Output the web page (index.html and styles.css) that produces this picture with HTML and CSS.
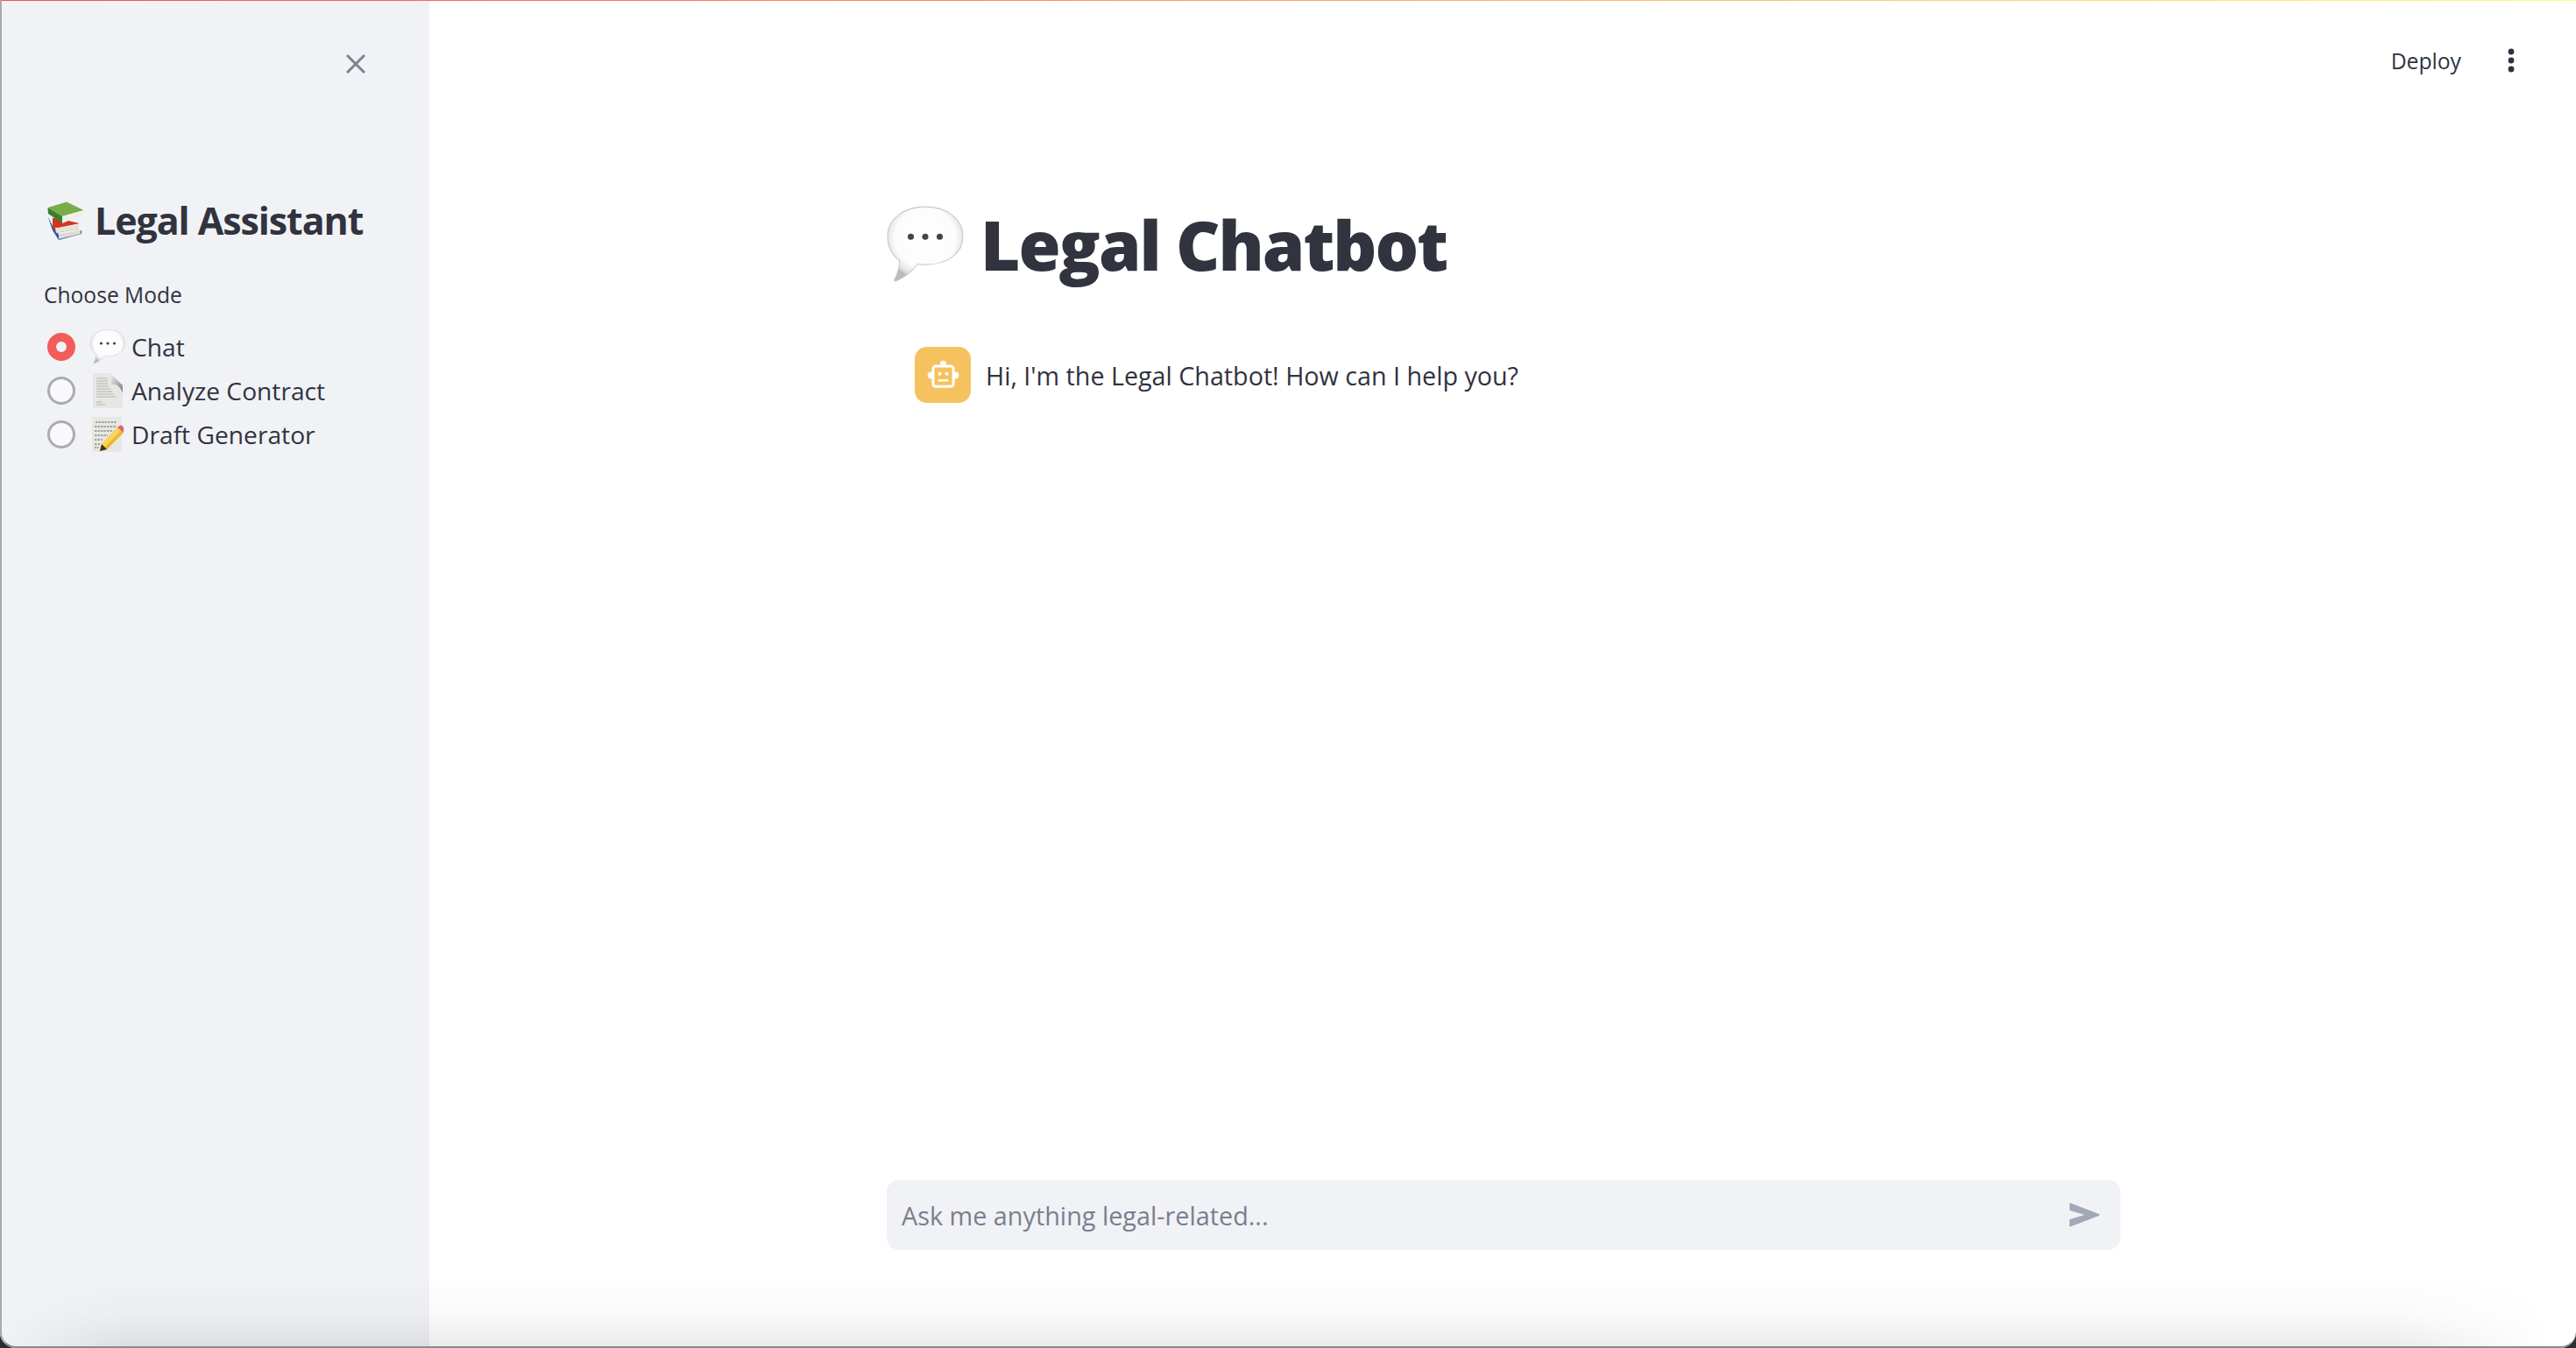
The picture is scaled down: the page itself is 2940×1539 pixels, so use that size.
FILE: index.html
```html
<!DOCTYPE html>
<html>
<head>
    <title>Legal Assistant</title>
    <link rel="stylesheet" href="styles.css">
</head>
<body>
    <svg class="defs" width="0" height="0">
        <defs>
            <radialGradient id="bubble-fill" cx="50%" cy="42%" r="56%">
                <stop offset="0" stop-color="#ffffff"/>
                <stop offset="0.72" stop-color="#fcfcfc"/>
                <stop offset="0.92" stop-color="#e2e2e2"/>
                <stop offset="1" stop-color="#bababa"/>
            </radialGradient>
            <linearGradient id="curl-fill" x1="0" y1="0" x2="1" y2="1">
                <stop offset="0" stop-color="#f2f2f2"/>
                <stop offset="1" stop-color="#7d7d7d"/>
            </linearGradient>
            <symbol id="bubble" viewBox="0 0 40 40">
                <path d="M20 0.5C31 0.5 39.5 6.5 39.5 16C39.5 25 31 30.5 20 30.5C18.6 30.5 17.2 30.4 15.9 30.2C13.6 33.6 9.6 36.8 5 39C4.2 39.3 3.7 38.8 4.1 38.1C5.6 35.4 6.6 32 6.6 28.4C2.9 25.6 0.5 21.4 0.5 16C0.5 6.5 9 0.5 20 0.5Z" fill="url(#bubble-fill)" stroke="#c9c9c9" stroke-width="0.5"/>
                <circle cx="12.5" cy="16" r="1.6" fill="#444"/>
                <circle cx="20" cy="16" r="1.6" fill="#444"/>
                <circle cx="27.5" cy="16" r="1.6" fill="#444"/>
            </symbol>
            <symbol id="books" viewBox="0 0 42 44">
                <path d="M0.5 17L6 33L13 44L39 37V33L13 38L6 28Z" fill="#2f54a8"/>
                <path d="M13 38L38 32V37L13 43Z" fill="#dedcd2"/>
                <path d="M6 19L36 25V31L10 36L6 28Z" fill="#d1361f"/>
                <path d="M9 30L36 25V31L10 36Z" fill="#e7e3d8"/>
                <path d="M6 19L24 22L36 25L12 30L6 25Z" fill="#d1361f"/>
                <path d="M0.5 7L22 0.5L41.5 10L17 17Z" fill="#78ad4a"/>
                <path d="M0.5 7L17 17V25L1 14Z" fill="#3d7f2c"/>
                <path d="M17 17L41.5 10V15L17 25Z" fill="#f0efe6"/>
            </symbol>
            <symbol id="page" viewBox="0 0 34 40">
                <path d="M0 0H20L34 14V40H0Z" fill="#e6e6e4"/>
                <path d="M20 0C22 7 21 13 21 13C26 12 31 14 34 23V14Z" fill="url(#curl-fill)"/>
                <g stroke="#a8a8a8" stroke-width="0.8">
                    <path d="M4 6H17M4 9H17M4 12H17M4 15H18M4 18H20M4 21H22M4 24H24M4 27H26"/>
                    <path d="M4 33H11M4 36H14"/>
                </g>
            </symbol>
            <symbol id="memo" viewBox="0 0 36 40">
                <path d="M0 0H34V40H0Z" fill="#e8e7e2"/>
                <g stroke="#55554f" stroke-width="0.9" stroke-dasharray="2.5 1" fill="none">
                    <path d="M4 6H28M3 11H28M3 16H24M3 21H18M3 26H12M3 31H9M3 35H8"/>
                </g>
                <path d="M29 12L36 18L17 37L9 39L11 31Z" fill="#f0b62c"/>
                <path d="M29 12L33 15.5L14 35L11 31Z" fill="#f8d65c"/>
                <path d="M29 12L31.5 10C33 9 35 10 36 12C36.5 14 36 16 36 18Z" fill="#e0686a"/>
                <path d="M11 31L9 39L17 37Z" fill="#3b3324"/>
            </symbol>
        </defs>
    </svg>

    <div class="app">
        <aside class="sidebar">
            <div class="sidebar-top">
                <svg class="close-icon" viewBox="0 0 24 24">
                    <path d="M2 2L22 22M22 2L2 22" stroke="#7f828f" stroke-width="3" fill="none"/>
                </svg>
            </div>
            <h2 class="side-title">
                <svg class="books-icon"><use href="#books"/></svg>
                <span>Legal Assistant</span>
            </h2>
            <div class="mode-label">Choose Mode</div>
            <div class="mode-list">
                <div class="mode-row">
                    <span class="radio radio-on"></span>
                    <svg class="mode-icon"><use href="#bubble"/></svg>
                    <span class="mode-text">Chat</span>
                </div>
                <div class="mode-row">
                    <span class="radio"></span>
                    <svg class="mode-icon"><use href="#page"/></svg>
                    <span class="mode-text">Analyze Contract</span>
                </div>
                <div class="mode-row">
                    <span class="radio"></span>
                    <svg class="mode-icon"><use href="#memo"/></svg>
                    <span class="mode-text">Draft Generator</span>
                </div>
            </div>
        </aside>

        <main class="main">
            <header class="toolbar">
                <span class="deploy">Deploy</span>
                <svg class="kebab" viewBox="0 0 8 28">
                    <circle cx="4" cy="4" r="3.4" fill="#31333f"/>
                    <circle cx="4" cy="14" r="3.4" fill="#31333f"/>
                    <circle cx="4" cy="24" r="3.4" fill="#31333f"/>
                </svg>
            </header>
            <div class="content">
                <h1 class="page-title">
                    <svg class="title-icon"><use href="#bubble"/></svg>
                    <span>Legal Chatbot</span>
                </h1>
                <div class="message">
                    <div class="avatar">
                        <svg viewBox="0 0 32 32" width="37" height="37">
                            <circle cx="16" cy="4.5" r="3" fill="#fff"/>
                            <circle cx="4" cy="16" r="3.4" fill="#fff"/>
                            <circle cx="28" cy="16" r="3.4" fill="#fff"/>
                            <rect x="6" y="7" width="20" height="20" rx="2.5" fill="#f6c25f" stroke="#fff" stroke-width="2.6"/>
                            <rect x="11" y="13" width="3" height="3" fill="#fff"/>
                            <rect x="18" y="13" width="3" height="3" fill="#fff"/>
                            <rect x="11" y="20" width="10" height="2" fill="#fff"/>
                        </svg>
                    </div>
                    <p class="message-text">Hi, I'm the Legal Chatbot! How can I help you?</p>
                </div>
                <div class="chat-input">
                    <span class="placeholder">Ask me anything legal-related...</span>
                    <svg class="send-icon" viewBox="0 0 35 30">
                        <path d="M1 1.5L33.5 14C34.6 14.5 34.6 15.5 33.5 16L1 28.5C0.4 28.7 0 28.3 0 27.6V21C0 20.4 0.3 20 0.9 19.9L17 15L0.9 10.1C0.3 10 0 9.6 0 9V2.4C0 1.7 0.4 1.3 1 1.5Z" fill="#a3a8b8"/>
                    </svg>
                </div>
            </div>
        </main>
    </div>

    <div class="top-stripe"></div>
    <div class="bottom-shade"></div>
    <div class="window-frame"></div>
</body>
</html>
```

FILE: styles.css
```css
:root {
    --text-color: #31333f;
    --side-bg: #f0f2f6;
}

html, body {
    margin: 0;
    height: 100%;
    overflow: hidden;
}

body {
    font-family: "Open Sans", "Lato", sans-serif;
    color: var(--text-color);
    background: #fff;
}

.defs {
    position: absolute;
}

.app {
    display: flex;
    height: 1539px;
}

/* Sidebar */
.sidebar {
    width: 490px;
    flex-shrink: 0;
    box-sizing: border-box;
    padding: 0 0 0 50px;
    background: var(--side-bg);
}

.sidebar-top {
    display: flex;
    justify-content: flex-end;
    padding: 61px 72px 0 0;
}

.close-icon {
    width: 24px;
    height: 24px;
}

.side-title {
    display: flex;
    align-items: center;
    margin: 140px 0 0 4px;
    font-size: 43px;
    letter-spacing: -1.1px;
    line-height: 54px;
    font-weight: 700;
    white-space: nowrap;
}

.books-icon {
    width: 42px;
    height: 44px;
    margin-right: 12px;
}

.mode-label {
    margin-top: 41px;
    font-size: 24.6px;
    line-height: 34px;
}

.mode-list {
    display: flex;
    flex-direction: column;
    gap: 10px;
    margin-top: 22px;
}

.mode-row {
    display: flex;
    align-items: center;
    height: 40px;
    padding-left: 4px;
}

.radio {
    width: 32px;
    height: 32px;
    box-sizing: border-box;
    border: 3px solid #a9abb3;
    border-radius: 50%;
    background: #f9f9fb;
}

.radio-on {
    border: 10px solid #f25c59;
    background: var(--side-bg);
}

.mode-icon {
    width: 40px;
    height: 40px;
    margin: 0 7px 0 17px;
}

.mode-text {
    font-size: 28.2px;
    line-height: 40px;
    white-space: nowrap;
}

/* Main */
.main {
    flex: 1;
    display: flex;
    flex-direction: column;
    min-width: 0;
    padding-left: 2px;
}

.toolbar {
    display: flex;
    justify-content: flex-end;
    align-items: center;
    gap: 53px;
    height: 138px;
    padding: 0 70px 0 0;
}

.deploy {
    font-size: 24.7px;
}

.kebab {
    width: 8px;
    height: 28px;
}

.content {
    flex: 1;
    display: flex;
    flex-direction: column;
    width: 1408px;
    margin: 0 auto;
}

.page-title {
    display: flex;
    align-items: center;
    margin: 93px 0 0;
    font-size: 78px;
    letter-spacing: -2px;
    line-height: 96px;
    font-weight: 800;
    white-space: nowrap;
}

.title-icon {
    width: 88px;
    height: 88px;
    margin-right: 19px;
}

.message {
    display: flex;
    align-items: center;
    gap: 17px;
    margin: 69px 0 0 32px;
}

.avatar {
    display: flex;
    align-items: center;
    justify-content: center;
    width: 64px;
    height: 64px;
    border-radius: 14px;
    background: #f6c25f;
}

.message-text {
    margin: 0;
    font-size: 28.7px;
}

.chat-input {
    display: flex;
    align-items: center;
    justify-content: space-between;
    height: 80px;
    margin-top: auto;
    margin-bottom: 112px;
    padding: 0 23px 0 17px;
    border-radius: 14px;
    background: var(--side-bg);
}

.placeholder {
    font-size: 28.8px;
    color: #7b7e8c;
}

.send-icon {
    width: 35px;
    height: 30px;
}

/* Overlays: the screenshot's window edge */
.top-stripe {
    position: fixed;
    top: 0;
    left: 0;
    right: 0;
    height: 1px;
    background: linear-gradient(90deg, #ff4b4b, #fffd80);
}

.bottom-shade {
    position: fixed;
    left: 0;
    right: 0;
    bottom: 0;
    height: 85px;
    pointer-events: none;
    background: linear-gradient(180deg, rgba(0,0,0,0), rgba(0,0,0,0.02) 55%, rgba(0,0,0,0.08));
    -webkit-mask-image: linear-gradient(90deg, transparent, #000 5%, #000 93%, transparent 99%);
    mask-image: linear-gradient(90deg, transparent, #000 5%, #000 93%, transparent 99%);
}

.window-frame {
    position: fixed;
    inset: 0;
    overflow: hidden;
    pointer-events: none;
    border-left: 2px solid #aaa;
    border-bottom: 2px solid #8a8a8a;
    border-radius: 0 0 18px 18px;
    box-shadow: 0 0 0 30px #2a2d33;
}
```
